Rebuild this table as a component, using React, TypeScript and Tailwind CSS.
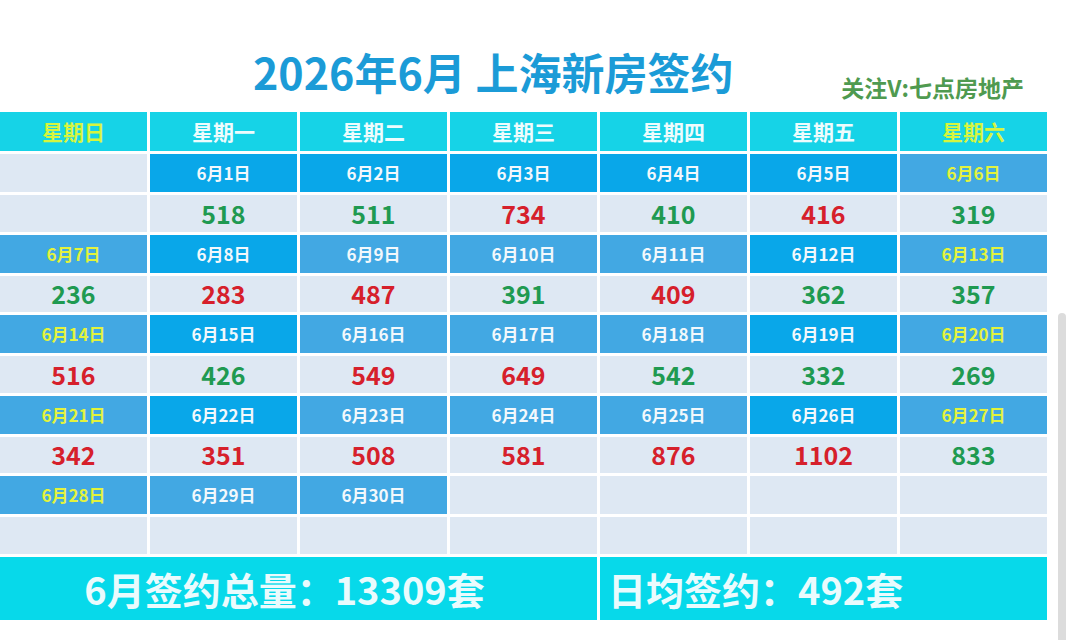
import React from 'react';

type Day = { date: string; value?: number; up?: boolean; dark?: boolean; weekend?: boolean } | null;

const weekdays = ['星期日', '星期一', '星期二', '星期三', '星期四', '星期五', '星期六'];

// up = red (higher), otherwise green
const weeks: Day[][] = [
  [
    null,
    { date: '6月1日', value: 518, dark: true },
    { date: '6月2日', value: 511, dark: true },
    { date: '6月3日', value: 734, up: true, dark: true },
    { date: '6月4日', value: 410, dark: true },
    { date: '6月5日', value: 416, up: true, dark: true },
    { date: '6月6日', value: 319, weekend: true },
  ],
  [
    { date: '6月7日', value: 236, weekend: true },
    { date: '6月8日', value: 283, up: true, dark: true },
    { date: '6月9日', value: 487, up: true },
    { date: '6月10日', value: 391 },
    { date: '6月11日', value: 409, up: true },
    { date: '6月12日', value: 362, dark: true },
    { date: '6月13日', value: 357, weekend: true },
  ],
  [
    { date: '6月14日', value: 516, up: true, weekend: true },
    { date: '6月15日', value: 426, dark: true },
    { date: '6月16日', value: 549, up: true },
    { date: '6月17日', value: 649, up: true },
    { date: '6月18日', value: 542 },
    { date: '6月19日', value: 332, dark: true },
    { date: '6月20日', value: 269, weekend: true },
  ],
  [
    { date: '6月21日', value: 342, up: true, weekend: true },
    { date: '6月22日', value: 351, up: true, dark: true },
    { date: '6月23日', value: 508, up: true },
    { date: '6月24日', value: 581, up: true },
    { date: '6月25日', value: 876, up: true },
    { date: '6月26日', value: 1102, up: true, dark: true },
    { date: '6月27日', value: 833, weekend: true },
  ],
  [
    { date: '6月28日', weekend: true },
    { date: '6月29日' },
    { date: '6月30日' },
    null,
    null,
    null,
    null,
  ],
];

const font = { fontFamily: '"Noto Sans CJK SC", "Noto Sans", sans-serif' };

const App: React.FC = () => {
  return (
    <div className="relative h-[640px] w-[1080px] overflow-hidden bg-white font-bold" style={font}>
      <div className="flex h-[112px] w-[1080px] items-start">
        <h1 className="ml-[253px] mt-[49px] text-[43px] leading-[44px] font-bold text-[#1b9bd7]">
          2026年6月 上海新房签约
        </h1>
        <div className="ml-auto mr-[56px] mt-[76px] text-[23px] leading-[23px] text-[#4f9a50]">
          关注V:七点房地产
        </div>
      </div>

      <div className="grid w-[1047px] grid-cols-7 gap-[3px]">
        {weekdays.map((w, i) => (
          <div
            key={w}
            className={`flex h-[39px] items-center justify-center bg-[#16d3e7] text-[21px] ${
              i === 0 || i === 6 ? 'text-[#d6f53e]' : 'text-[#eefcfd]'
            }`}
          >
            {w}
          </div>
        ))}

        {weeks.map((week, wi) => (
          <React.Fragment key={wi}>
            {week.map((d, di) => (
              <div
                key={`d${wi}-${di}`}
                className={`flex h-[38px] items-center justify-center text-[17px] ${
                  !d ? 'bg-[#dee8f3]' : d.dark ? 'bg-[#09a7e9]' : 'bg-[#42a8e3]'
                } ${d?.weekend ? 'text-[#e3f33c]' : 'text-[#f2f8fc]'}`}
              >
                {d?.date}
              </div>
            ))}
            {week.map((d, di) => (
              <div
                key={`v${wi}-${di}`}
                className={`flex h-[36.5px] items-center justify-center bg-[#dee8f3] text-[25px] ${
                  d?.up ? 'text-[#d6202b]' : 'text-[#1f9a51]'
                }`}
              >
                {d?.value ?? ''}
              </div>
            ))}
          </React.Fragment>
        ))}

        <div className="col-span-4 flex h-[63px] items-center justify-center bg-[#07d9ea] pr-[28px] text-[38px] text-[#eafbfd]">
          6月签约总量：13309套
        </div>
        <div className="col-span-3 flex h-[63px] items-center bg-[#07d9ea] pl-[8px] text-[38px] text-[#eafbfd]">
          日均签约：492套
        </div>
      </div>

      {/* scroll indicator */}
      <div className="absolute left-[1058px] top-[313px] h-[340px] w-[8px] rounded-full bg-[#dcdcdc]" />
    </div>
  );
};

export default App;
